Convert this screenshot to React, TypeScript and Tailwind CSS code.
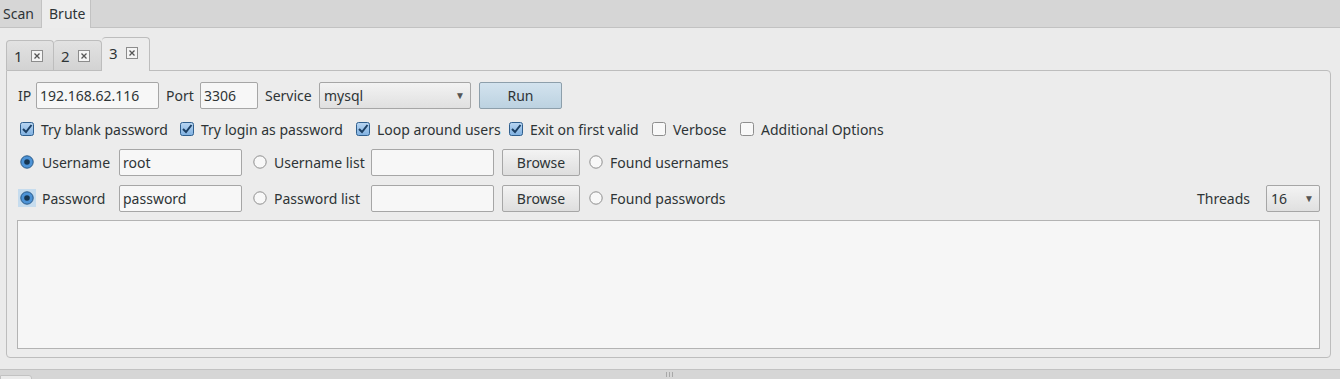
import React from "react";

const font = { fontFamily: '"Noto Sans", "Open Sans", sans-serif' };

function CloseBox() {
  return (
    <svg width="12" height="12" viewBox="0 0 12 12" className="shrink-0">
      <rect x="0.5" y="0.5" width="11" height="11" fill="#f4f4f4" stroke="#8c8c8c" />
      <path d="M3.5 3.5 L8.5 8.5 M8.5 3.5 L3.5 8.5" stroke="#555" strokeWidth="1.3" />
    </svg>
  );
}

function Check({ checked }: { checked: boolean }) {
  return checked ? (
    <svg width="14" height="14" viewBox="0 0 14 14" className="shrink-0">
      <defs>
        <linearGradient id="cbg" x1="0" y1="0" x2="0" y2="1">
          <stop offset="0" stopColor="#b9d6f2" />
          <stop offset="1" stopColor="#7fb0e0" />
        </linearGradient>
      </defs>
      <rect x="0.5" y="0.5" width="13" height="13" rx="2" fill="url(#cbg)" stroke="#2f5f8e" />
      <path d="M3 7 L6 10 L11.5 3" fill="none" stroke="#1c3f63" strokeWidth="2" />
    </svg>
  ) : (
    <svg width="14" height="14" viewBox="0 0 14 14" className="shrink-0">
      <rect x="0.5" y="0.5" width="13" height="13" rx="2" fill="#f8f8f8" stroke="#8e8e8e" />
    </svg>
  );
}

function Radio({ checked, focus }: { checked: boolean; focus?: boolean }) {
  return (
    <span className={`flex items-center justify-center w-[18px] h-[18px] shrink-0 ${focus ? "bg-[#c6dcee]" : ""}`}>
      {checked ? (
        <svg width="14" height="14" viewBox="0 0 14 14">
          <circle cx="7" cy="7" r="6.2" fill="#4d93d6" stroke="#2a5a88" strokeWidth="1" />
          <circle cx="7" cy="7" r="2.8" fill="#163652" />
        </svg>
      ) : (
        <svg width="14" height="14" viewBox="0 0 14 14">
          <circle cx="7" cy="7" r="6.2" fill="#f8f8f8" stroke="#8e8e8e" strokeWidth="1" />
        </svg>
      )}
    </span>
  );
}

function Input({ value, w }: { value: string; w: string }) {
  return (
    <div className={`${w} h-[27px] shrink-0 bg-[#f7f7f7] border border-[#a6a6a6] rounded-[2px] flex items-center px-[3px] text-[14px] text-[#2e3436]`}>
      {value}
    </div>
  );
}

function Btn({ label, w, blue }: { label: string; w: string; blue?: boolean }) {
  return (
    <div
      className={`${w} h-[27px] shrink-0 border rounded-[2px] flex items-center justify-center text-[14px] text-[#2e3436] ${
        blue
          ? "border-[#8d9fab] bg-gradient-to-b from-[#d3e3ee] to-[#bcd2e1]"
          : "border-[#a6a6a6] bg-gradient-to-b from-[#f3f3f3] to-[#dedede]"
      }`}
    >
      {label}
    </div>
  );
}

function Select({ value, w }: { value: string; w: string }) {
  return (
    <div className={`${w} h-[27px] shrink-0 border border-[#a6a6a6] rounded-[2px] bg-gradient-to-b from-[#f3f3f3] to-[#e0e0e0] flex items-center pl-[4px] pr-[5px] text-[14px] text-[#2e3436]`}>
      <span className="flex-1">{value}</span>
      <span className="text-[10px] text-[#555]">▼</span>
    </div>
  );
}

function CheckItem({ label, checked, w }: { label: string; checked: boolean; w: string }) {
  return (
    <div className={`${w} shrink-0 flex items-center gap-[7px] whitespace-nowrap`}>
      <Check checked={checked} />
      <span>{label}</span>
    </div>
  );
}

export default function App() {
  return (
    <div style={font} className="w-[1340px] h-[379px] bg-[#ebebeb] text-[#2e3436] text-[14px] flex flex-col overflow-hidden">
      {/* top tab bar */}
      <div className="h-[28px] bg-[#d6d6d6] border-b border-[#c2c2c2] flex items-stretch shrink-0">
        <div className="w-[42px] pl-[3px] flex items-center border-r border-[#c2c2c2]">Scan</div>
        <div className="w-[49px] pl-[7px] pb-[2px] flex items-center bg-[#ececec] border-r border-[#c2c2c2] -mb-px">Brute</div>
      </div>

      {/* inner tabs */}
      <div className="h-[42px] flex items-end pl-[6px] shrink-0">
        <div className="w-[48px] h-[30px] flex items-center gap-[8px] pl-[7px] pt-[1px] bg-gradient-to-b from-[#e2e2e2] to-[#d3d3d3] border border-[#bdbdbd] border-b-0 rounded-t-[4px] text-[15px]">
          <span>1</span>
          <CloseBox />
        </div>
        <div className="w-[48px] h-[30px] flex items-center gap-[8px] pl-[7px] pt-[1px] bg-gradient-to-b from-[#e2e2e2] to-[#d3d3d3] border border-[#bdbdbd] border-b-0 border-l-0 rounded-t-[4px] text-[15px]">
          <span>2</span>
          <CloseBox />
        </div>
        <div className="w-[48px] h-[34px] flex items-center gap-[8px] pl-[7px] pb-[3px] bg-[#ececec] border border-[#bdbdbd] border-b-0 border-l-0 rounded-t-[4px] text-[15px] -mb-px relative z-10">
          <span>3</span>
          <CloseBox />
        </div>
      </div>

      {/* panel */}
      <div className="ml-[6px] mr-[9px] h-[288px] shrink-0 border border-[#bdbdbd] rounded-b-[4px] rounded-tr-[4px] bg-[#ececec] px-[10px] pt-[11px] flex flex-col">
        {/* row 1 */}
        <div className="h-[27px] flex items-center">
          <span className="ml-[1px] w-[18px]">IP</span>
          <Input value="192.168.62.116" w="w-[123px]" />
          <span className="ml-[7px] w-[34px]">Port</span>
          <Input value="3306" w="w-[58px]" />
          <span className="ml-[7px] w-[54px]">Service</span>
          <Select value="mysql" w="w-[152px]" />
          <div className="ml-[8px]">
            <Btn label="Run" w="w-[83px]" blue />
          </div>
        </div>

        {/* row 2 */}
        <div className="h-[20px] mt-[10px] flex items-center pl-[3px]">
          <CheckItem label="Try blank password" checked w="w-[160px]" />
          <CheckItem label="Try login as password" checked w="w-[176px]" />
          <CheckItem label="Loop around users" checked w="w-[153px]" />
          <CheckItem label="Exit on first valid" checked w="w-[143px]" />
          <CheckItem label="Verbose" checked={false} w="w-[88px]" />
          <CheckItem label="Additional Options" checked={false} w="w-[150px]" />
        </div>

        {/* row 3 */}
        <div className="h-[26px] mt-[10px] flex items-center">
          <div className="w-[102px] flex items-center gap-[6px] pl-[1px]">
            <Radio checked />
            <span>Username</span>
          </div>
          <Input value="root" w="w-[123px]" />
          <div className="w-[129px] flex items-center gap-[5px] pl-[9px]">
            <Radio checked={false} />
            <span>Username list</span>
          </div>
          <Input value="" w="w-[123px]" />
          <div className="ml-[8px]">
            <Btn label="Browse" w="w-[78px]" />
          </div>
          <div className="ml-[7px] flex items-center gap-[5px]">
            <Radio checked={false} />
            <span>Found usernames</span>
          </div>
        </div>

        {/* row 4 */}
        <div className="h-[26px] mt-[10px] flex items-center">
          <div className="w-[102px] flex items-center gap-[6px] pl-[1px]">
            <Radio checked focus />
            <span>Password</span>
          </div>
          <Input value="password" w="w-[123px]" />
          <div className="w-[129px] flex items-center gap-[5px] pl-[9px]">
            <Radio checked={false} />
            <span>Password list</span>
          </div>
          <Input value="" w="w-[123px]" />
          <div className="ml-[8px]">
            <Btn label="Browse" w="w-[78px]" />
          </div>
          <div className="ml-[7px] flex items-center gap-[5px]">
            <Radio checked={false} />
            <span>Found passwords</span>
          </div>
          <span className="ml-auto mr-[16px]">Threads</span>
          <Select value="16" w="w-[54px]" />
        </div>

        {/* text area */}
        <div className="mt-[9px] h-[129px] bg-[#f6f6f6] border border-[#b3b3b3]" />
      </div>

      {/* bottom */}
      <div className="mt-[11px] flex-1 bg-[#d6d6d6] border-t border-[#c2c2c2] relative">
        <div className="absolute left-0 top-[5px] w-[32px] h-[10px] bg-[#ebebeb] border border-[#c2c2c2] rounded-tr-[3px]" />
        <div className="absolute left-[666px] top-[2px] flex gap-[2px]">
          <div className="w-px h-[5px] bg-[#a8a8a8]" />
          <div className="w-px h-[5px] bg-[#a8a8a8]" />
          <div className="w-px h-[5px] bg-[#a8a8a8]" />
        </div>
      </div>
    </div>
  );
}
